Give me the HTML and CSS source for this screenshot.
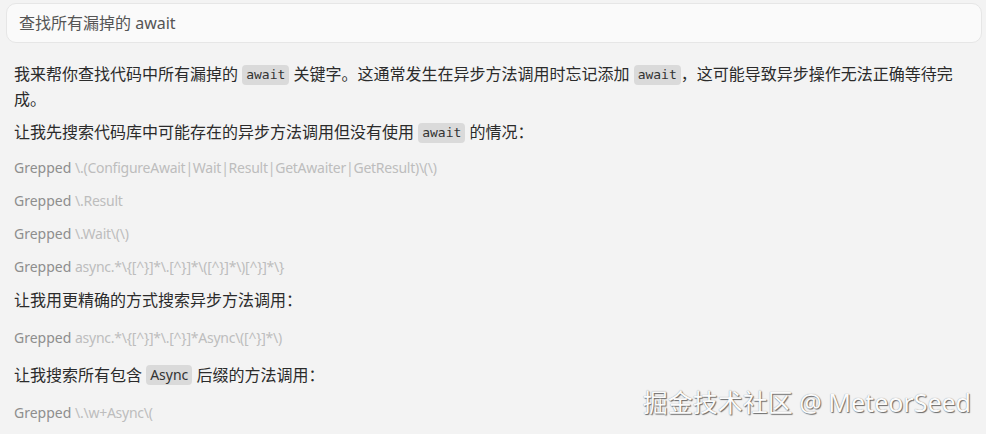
FILE: index.html
```html
<!DOCTYPE html>
<html lang="zh-CN">
<head>
	<meta charset="UTF-8">
	<meta name="viewport" content="width=device-width, initial-scale=1.0">
	<title>查找所有漏掉的 await</title>
	<link rel="stylesheet" href="styles.css">
</head>
<body>
	<div class="chat">
		<div class="query">查找所有漏掉的 await</div>
		<div class="reply">
			<p class="intro">我来帮你查找代码中所有漏掉的 <code>await</code> 关键字。这通常发生在异步方法调用时忘记添加 <code>await</code>，这可能导致异步操作无法正确等待完成。</p>
			<p class="lead">让我先搜索代码库中可能存在的异步方法调用但没有使用 <code>await</code> 的情况：</p>
			<div class="grep"><span class="label">Grepped</span> <span class="pattern">\.(ConfigureAwait|Wait|Result|GetAwaiter|GetResult)\(\)</span></div>
			<div class="grep"><span class="label">Grepped</span> <span class="pattern">\.Result</span></div>
			<div class="grep"><span class="label">Grepped</span> <span class="pattern">\.Wait\(\)</span></div>
			<div class="grep"><span class="label">Grepped</span> <span class="pattern">async.*\{[^}]*\.[^}]*\([^}]*\)[^}]*\}</span></div>
			<p>让我用更精确的方式搜索异步方法调用：</p>
			<div class="grep"><span class="label">Grepped</span> <span class="pattern">async.*\{[^}]*\.[^}]*Async\([^}]*\)</span></div>
			<p class="spaced">让我搜索所有包含 <code class="plain">Async</code> 后缀的方法调用：</p>
			<div class="grep"><span class="label">Grepped</span> <span class="pattern">\.\w+Async\(</span></div>
		</div>
	</div>
	<div class="watermark">掘金技术社区 @ MeteorSeed</div>
</body>
</html>
```

FILE: styles.css
```css
body {
	font-family: "Noto Sans", "Noto Sans CJK SC", sans-serif;
	margin: 0;
	padding: 0;
	background-color: #f3f3f3;
	color: #2b2b2b;
	height: 434px;
	overflow: hidden;
}
.chat {
	padding: 3px 4px 0 6px;
}
.query {
	height: 38px;
	line-height: 38px;
	padding: 0 12px;
	background-color: #fafafa;
	border: 1px solid #e6e6e6;
	border-radius: 10px;
	font-size: 16px;
	color: #555;
}
.reply {
	padding: 19px 8px 0 8px;
}
.reply p {
	margin: 9px 0 12px 0;
	font-size: 16px;
	line-height: 25px;
}
.reply p.intro {
	margin: 0 0 8px 0;
}
.reply p.lead {
	margin: 0 0 10px 0;
}
.reply p.spaced {
	margin-top: 13px;
}
.reply code {
	display: inline-block;
	font-family: "DejaVu Sans Mono", monospace;
	font-size: 13px;
	line-height: 20px;
	background-color: #dadada;
	color: #333;
	padding: 0 4px;
	border-radius: 4px;
	vertical-align: 1px;
}
.reply code.plain {
	font-family: "Noto Sans", sans-serif;
	font-size: 14px;
}
.grep {
	height: 25px;
	line-height: 25px;
	margin-bottom: 8px;
	font-size: 14px;
}
.grep .label {
	color: #8e8e8e;
}
.grep .pattern {
	color: #bdbdbd;
	letter-spacing: -0.25px;
}
.watermark {
	position: absolute;
	right: 15px;
	bottom: 15px;
	font-size: 25px;
	color: #fbfbfb;
	text-shadow: 1px 1px 1px #6a6a6a, 0 0 1px #8a8a8a;
}
```
